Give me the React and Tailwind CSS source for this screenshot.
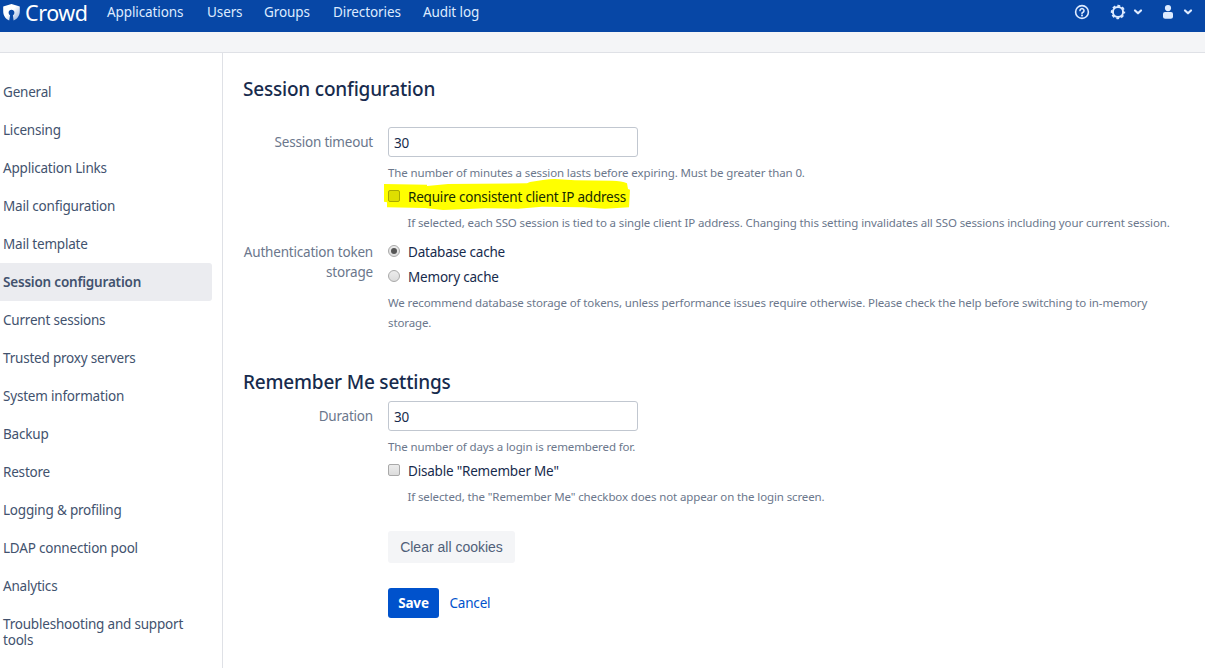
const NAV = [
  { label: 'Applications', cls: 'w-[100px]' },
  { label: 'Users', cls: 'w-[57px]' },
  { label: 'Groups', cls: 'w-[69px]' },
  { label: 'Directories', cls: 'w-[90px]' },
  { label: 'Audit log', cls: 'w-[80px]' },
];

const SIDEBAR = [
  'General',
  'Licensing',
  'Application Links',
  'Mail configuration',
  'Mail template',
  'Session configuration',
  'Current sessions',
  'Trusted proxy servers',
  'System information',
  'Backup',
  'Restore',
  'Logging & profiling',
  'LDAP connection pool',
  'Analytics',
];

function Logo() {
  return (
    <svg className="mt-[3px] size-[19px] shrink-0" viewBox="0 0 19 19">
      <defs>
        <linearGradient id="shield" x1="0.45" y1="0.45" x2="0.8" y2="0.8">
          <stop offset="0" stopColor="#fff" />
          <stop offset="1" stopColor="#b5c8e8" />
        </linearGradient>
      </defs>
      <path
        fill="url(#shield)"
        d="M9.5 1 L17.8 3.4 V8 C17.8 12.5 15.6 15.8 11.6 17.6 L10.9 12.2 A2.9 2.9 0 1 0 8.1 12.2 L7.2 17.6 C3.4 15.8 1.2 12.5 1.2 8 V3.4 Z"
      />
    </svg>
  );
}

function Chevron() {
  return (
    <svg className="h-[8px] w-[10px]" viewBox="0 0 10 8" fill="none" stroke="#deebff" strokeWidth="2.2" strokeLinecap="round" strokeLinejoin="round">
      <path d="M2 2.5 L5 5.3 L8 2.5" />
    </svg>
  );
}

function Header() {
  return (
    <header className="flex h-8 items-start bg-[#0747a6] text-[#deebff]">
      <div className="flex w-[107px] items-start pl-[2px]">
        <Logo />
        <span className="ml-[4px] text-[21.5px] leading-[26px] tracking-[-0.45px] text-white">Crowd</span>
      </div>
      <nav className="flex text-[13.5px] leading-[25px]">
        {NAV.map((n) => (
          <a key={n.label} className={n.cls + ' whitespace-nowrap tracking-[-0.1px]'}>{n.label}</a>
        ))}
      </nav>
      <div className="ml-auto flex h-6 items-center pr-[12px]">
        <svg className="size-[16px]" viewBox="0 0 16 16" fill="none" stroke="#deebff">
          <circle cx="8" cy="8" r="6.4" strokeWidth="1.6" />
          <path d="M6 6.6 a2 2 0 1 1 3.1 1.7 q-1.1.5-1.1 1.3" strokeWidth="1.6" strokeLinecap="round" />
          <circle cx="8" cy="11.5" r="1" fill="#deebff" stroke="none" />
        </svg>
        <svg className="ml-[20px] size-[16px]" viewBox="0 0 16 16" fill="none" stroke="#deebff">
          <circle cx="8" cy="8" r="5.1" strokeWidth="2" />
          <circle cx="8" cy="8" r="6.3" strokeWidth="1.8" strokeDasharray="2.8 2.148" strokeDashoffset="1.4" />
        </svg>
        <span className="ml-[7px]"><Chevron /></span>
        <svg className="ml-[17px] size-[16px]" viewBox="0 0 16 16" fill="#deebff">
          <circle cx="8" cy="4.1" r="3.1" />
          <path d="M3 9.8 Q3 8 5 8 H11 Q13 8 13 9.8 V12.8 Q13 14.8 10.8 14.8 H5.2 Q3 14.8 3 12.8 Z" />
        </svg>
        <span className="ml-[7px]"><Chevron /></span>
      </div>
    </header>
  );
}

function Sidebar() {
  return (
    <aside className="w-[223px] shrink-0 border-r border-[#dfe1e6] pt-[20px] leading-[16px] text-[#42526e]">
      {SIDEBAR.map((s) => (
        <a
          key={s}
          className={
            s === 'Session configuration'
              ? 'flex h-[38px] w-[212px] items-center rounded-r-[3px] bg-[#ebecf0] pl-[3px] font-semibold'
              : 'flex h-[38px] w-[212px] items-center pl-[3px]'
          }
        >
          {s}
        </a>
      ))}
      <a className="block w-[212px] pl-[3px] pt-[11px]">
        Troubleshooting and support
        <br />
        tools
      </a>
    </aside>
  );
}

function Row({ label, children }) {
  return (
    <div className="flex">
      <div className="w-[130px] shrink-0 whitespace-nowrap text-right leading-[20px] text-[#6b778c]">{label}</div>
      <div className="ml-[15px] flex-1">{children}</div>
    </div>
  );
}

function TextField({ value }) {
  return (
    <div className="flex h-[30px] w-[250px] items-center rounded-[3px] border border-[#c1c7d0] bg-white pl-[5px] pt-[2px]">{value}</div>
  );
}

function Hint({ children }) {
  return <p className="text-[11.5px] leading-[20px] tracking-[-0.12px] text-[#6b778c]">{children}</p>;
}

function Box() {
  return (
    <span className="block size-[12px] shrink-0 rounded-[2px] border border-[#a9a9a9] bg-linear-to-b from-[#ececec] to-[#dcdcdc]" />
  );
}

function Radio({ checked }) {
  return (
    <span className="flex size-[12px] shrink-0 items-center justify-center rounded-full border border-[#a9a9a9] bg-linear-to-b from-[#ececec] to-[#dcdcdc]">
      {checked && <span className="size-[6px] rounded-full bg-[#555]" />}
    </span>
  );
}

export default function App() {
  return (
    <div className="flex h-[668px] w-[1205px] flex-col overflow-hidden bg-white font-['Noto_Sans','Open_Sans',sans-serif] text-[13.5px] tracking-[-0.2px] text-[#172b4d]">
      <Header />
      <div className="h-[21px] shrink-0 border-b border-[#dfe1e6] bg-[#f4f5f7]" />
      <div className="flex flex-1">
        <Sidebar />
        <main className="flex-1 pl-[20px]">
          <h2 className="pt-[24px] text-[19px] font-medium leading-[24px]">Session configuration</h2>
          <div className="mt-[26px]">
            <Row label={<div className="pt-[5px]">Session timeout</div>}>
              <TextField value="30" />
              <div className="mt-[6px]"><Hint>The number of minutes a session lasts before expiring. Must be greater than 0.</Hint></div>
              <div className="relative flex h-[24px] items-start pt-[3px]">
                <svg className="absolute left-[-4px] top-[-4px] h-[32px] w-[248px]" viewBox="0 0 248 32">
                  <path
                    fill="#ff0"
                    d="M0 5 L43 5.7 V7 L64 5 L143 4.3 L146 3 L159 1 Q165 0 171 0 L191 1.3 L228 1.7 Q238 2 243 4.3 L244 10 L246 10.7 L245 28.3 L221 29.7 L199 28.3 L158 27.7 L134 29.7 L101 29.3 L59 31 L41 29 L3 28.3 V23.3 L0 22.7 Z"
                  />
                </svg>
                <span className="relative mt-[4px] size-[12px] rounded-[2px] border border-[#a9a900] bg-[#dede00]" />
                <span className="relative ml-[8px] mt-px leading-[20px] text-[#172b00]">Require consistent client IP address</span>
              </div>
              <div className="ml-[19.5px] mt-[6px]"><Hint>If selected, each SSO session is tied to a single client IP address. Changing this setting invalidates all SSO sessions including your current session.</Hint></div>
            </Row>
            <div className="mt-[9px]">
              <Row label={<>Authentication token<br />storage</>}>
                <div className="-mt-px flex h-[20px] items-center"><Radio checked /><span className="ml-[8px] mt-[3px]">Database cache</span></div>
                <div className="mt-[5px] flex h-[20px] items-center"><Radio /><span className="ml-[8px] mt-[3px]">Memory cache</span></div>
                <div className="mt-[7px]"><Hint>We recommend database storage of tokens, unless performance issues require otherwise. Please check the help before switching to in-memory<br />storage.</Hint></div>
              </Row>
            </div>
          </div>
          <h2 className="mt-[37px] text-[19px] font-medium leading-[24px]">Remember Me settings</h2>
          <div className="mt-[7px]">
            <Row label={<div className="pt-[5px]">Duration</div>}>
              <TextField value="30" />
              <div className="mt-[6px]"><Hint>The number of days a login is remembered for.</Hint></div>
              <div className="mt-[3px] flex h-[20px] items-center"><Box /><span className="ml-[8px] mt-[3px]">Disable "Remember Me"</span></div>
              <div className="ml-[19.5px] mt-[7px]"><Hint>If selected, the "Remember Me" checkbox does not appear on the login screen.</Hint></div>
              <button className="mt-[24px] flex h-[32px] w-[127px] items-center justify-center rounded-[3px] bg-[#f4f5f7] font-['Liberation_Sans',Arial,sans-serif] text-[14px] tracking-normal text-[#505f79]">Clear all cookies</button>
              <div className="mt-[25px] flex items-center">
                <button className="h-[30px] w-[51px] rounded-[3px] bg-[#0052cc] font-bold text-white">Save</button>
                <a className="ml-[10.5px] text-[#0052cc]">Cancel</a>
              </div>
            </Row>
          </div>
        </main>
      </div>
    </div>
  );
}
